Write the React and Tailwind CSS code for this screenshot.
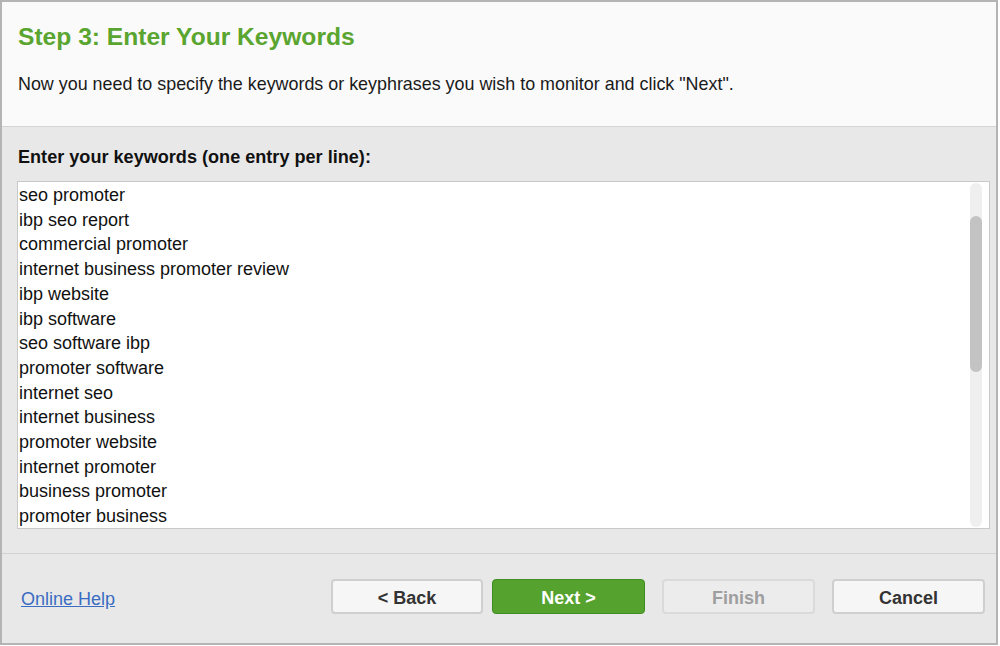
import React from "react";

const keywords = [
  "seo promoter",
  "ibp seo report",
  "commercial promoter",
  "internet business promoter review",
  "ibp website",
  "ibp software",
  "seo software ibp",
  "promoter software",
  "internet seo",
  "internet business",
  "promoter website",
  "internet promoter",
  "business promoter",
  "promoter business",
];

export default function App() {
  return (
    <div className="w-[998px] h-[645px] border-2 border-[#b4b4b4] bg-[#e8e8e8] flex flex-col font-['Liberation_Sans',Arial,sans-serif] text-[#1a1a1a]">
      <div className="h-[125px] shrink-0 bg-[#fafafa] border-b border-[#d4d4d4] pl-[16px] pt-[21px]">
        <h1 className="text-[24.6px] leading-[28px] font-bold text-[#5aa530]">Step 3: Enter Your Keywords</h1>
        <p className="mt-[21px] text-[17.9px] leading-[24px]">
          Now you need to specify the keywords or keyphrases you wish to monitor and click "Next".
        </p>
      </div>
      <div className="flex flex-col pl-[15px] pr-[6px] pt-[18px] pb-[24px] border-b border-[#d2d2d2]">
        <div className="pl-[1px] text-[18.1px] leading-[24px] font-bold text-[#111]">Enter your keywords (one entry per line):</div>
        <div className="mt-[12px] h-[348px] border border-[#c9c9c9] bg-white flex">
          <div className="flex-1 pl-[1px] pt-[1px] text-[18px] leading-[24.7px] text-[#111]">
            {keywords.map((k) => (
              <div key={k}>{k}</div>
            ))}
          </div>
          <div className="w-[12px] mr-[7px] my-[1px] rounded-full bg-[#efefef] pt-[33px]">
            <div className="h-[156px] rounded-full bg-[#c3c3c3]"></div>
          </div>
        </div>
      </div>
      <div className="flex-1 flex items-start pt-[25px] pl-[19px] pr-[11px]">
        <a href="#" className="mt-[8px] text-[18px] leading-[24px] text-[#3a6cc2] underline">Online Help</a>
        <div className="ml-auto flex">
          <button className="w-[152px] h-[35px] pt-[3px] rounded-[4px] border-2 border-[#cfcfcf] bg-[#f6f6f6] text-[18px] font-bold text-[#333]">&lt; Back</button>
          <button className="ml-[9px] w-[153px] h-[35px] pt-[3px] rounded-[4px] border border-[#3f8c1f] bg-[#55a32e] text-[18px] font-bold text-white">Next &gt;</button>
          <button className="ml-[17px] w-[153px] h-[35px] pt-[3px] rounded-[4px] border-2 border-[#dadada] bg-[#ececec] text-[18px] font-bold text-[#9e9e9e]">Finish</button>
          <button className="ml-[17px] w-[153px] h-[35px] pt-[3px] rounded-[4px] border-2 border-[#cfcfcf] bg-[#f6f6f6] text-[18px] font-bold text-[#333]">Cancel</button>
        </div>
      </div>
    </div>
  );
}
